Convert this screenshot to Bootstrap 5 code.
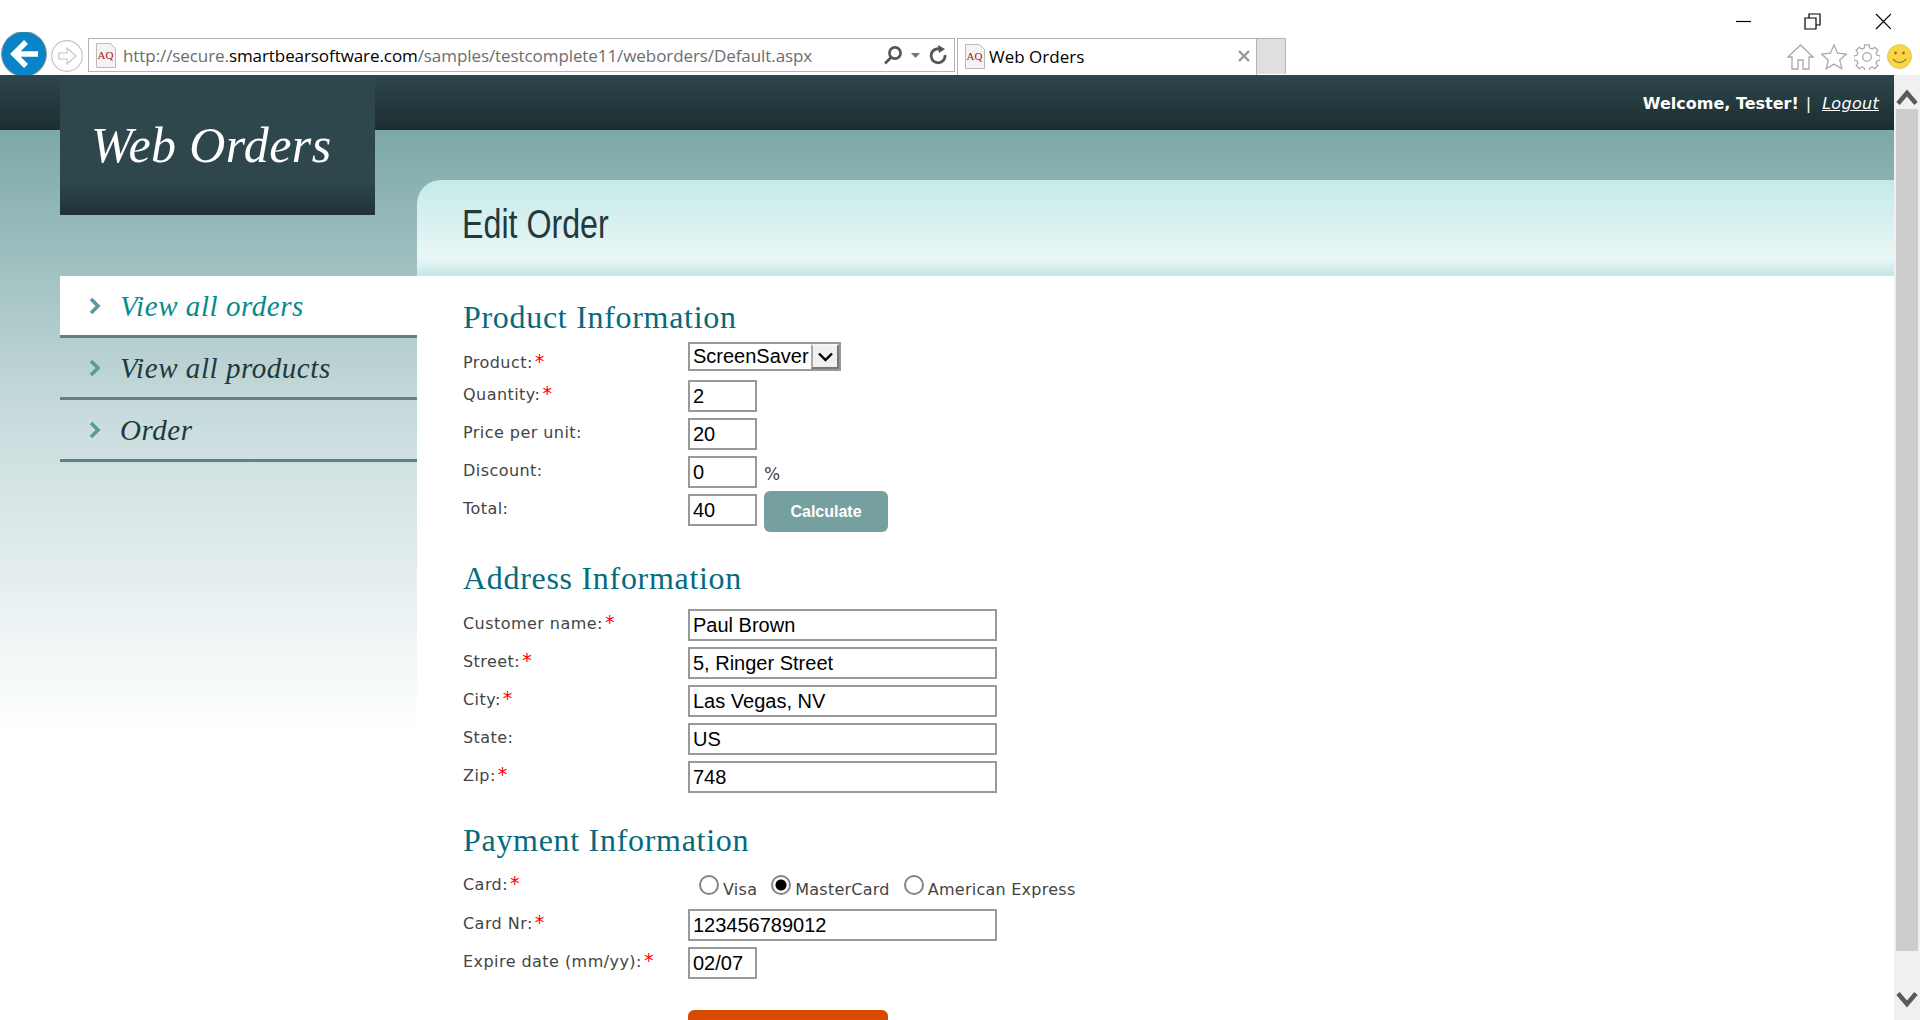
<!DOCTYPE html>
<html lang="en">
<head>
  <meta charset="UTF-8" />
  <meta name="viewport" content="width=device-width, initial-scale=1.0"/>
  <title>Web Orders</title>
  <link href="https://cdn.jsdelivr.net/npm/bootstrap@5.3.3/dist/css/bootstrap.min.css" rel="stylesheet">
  <style>
    html, body { height: 100%; overflow: hidden; }
    body { font-family: "DejaVu Sans", sans-serif; background: #fff; }

    /* browser chrome */
    .ie-chrome { height: 75px; flex: none; }
    .ie-winbar { height: 38px; padding-right: 29px; }
    .ie-winbar svg { display: block; }
    .ie-toolbar { height: 37px; padding-left: 1px; }
    .ie-back { width: 46px; height: 43px; margin-top: -6px; flex: none; }
    .ie-forward { width: 32px; height: 32px; margin-left: 4px; margin-top: 2px; flex: none; }
    .ie-address { width: 867px; height: 34px; margin-left: 5px; border: 1px solid #b4b4b4; padding: 0 6px 0 7px; }
    .ie-url { font: 17px "Open Sans", sans-serif; color: #6d6d6d; margin-left: 7px; white-space: nowrap; padding-top: 1px; letter-spacing: -.08px; }
    .ie-url b { font-weight: 400; color: #000; }
    .ie-tab { width: 300px; height: 37px; margin-left: 2px; border: 1px solid #b4b4b4; border-bottom: 0; padding: 0 6px 2px 7px; font: 17px "Open Sans", sans-serif; color: #000; }
    .ie-newtab { width: 29px; height: 36px; background: #dfdfdf; border: 1px solid #b4b4b4; border-bottom: 0; border-left: 0; }
    .ie-tools { margin-left: auto; margin-top: 6px; padding-right: 8px; gap: 7px; }

    /* page */
    .site { background: linear-gradient(#2d474c, #1c2d30) 0 0 / 100% 55px no-repeat,
                        linear-gradient(#7da8a8 0, #c9dcdd 290px, #fff 600px) 0 55px / 100% 600px no-repeat, #fff; min-width: 0; }
    .side-col { width: 417px; padding-left: 60px; flex: none; }
    .logo-box { width: 315px; height: 140px; background: linear-gradient(#2d474c 75%, #203337); color: #fff; font: italic 50px "Liberation Serif", serif; padding: 45px 0 0 31px; line-height: 1; letter-spacing: .4px; }
    .side-menu { margin-top: 61px; }
    .side-link { height: 62px; border-bottom: 3px solid #5f8385; color: #21393d; font: italic 29px "Liberation Serif", serif; text-decoration: none; padding: 2px 0 0 29px; gap: 19px; letter-spacing: .55px; }
    .side-link svg { margin-top: -2px; }
    .side-link.is-active { background: #fff; color: #078a8c; }
    .main-col { min-width: 0; }
    .welcome { height: 55px; color: #fff; font-size: 16px; padding: 3px 15px 0 0; gap: 7px; }
    .welcome a { color: #fff; font-style: italic; font-weight: 400; margin-left: 4px; letter-spacing: .3px; }
    .title-band { height: 96px; margin-top: 50px; border-top-left-radius: 24px; padding: 22px 0 0 45px;
      background: linear-gradient(#c5eae8 0, #e9f7f6 82%, #c5e6e6 100%); }
    .title-band h1 { font: 400 40px/1.1 "Liberation Sans", sans-serif; color: #22393e; margin: 0; transform: scaleX(.805); transform-origin: left top; }
    .form-area { background: #fff; padding: 24px 0 0 46px; height: 760px; }
    .sec-title { font: 400 32px/34px "Liberation Serif", serif; color: #056a7e; margin: 0 0 14px; letter-spacing: .7px; }
    .sec-title.first { margin-bottom: 8px; }
    .sec-title.gap-big { margin-top: 29px; }
    .fld-row { height: 38px; }
    .fld-label { width: 225px; flex: none; font-size: 16px; line-height: 29px; color: #444; letter-spacing: .45px; }
    .fld-label.first-label { margin-top: 6px; }
    .fld-label i { color: #f00; font-style: normal; font-size: 19px; margin-left: 2px; line-height: 1; }
    .fld-input { height: 32px; width: 69px; border: 2px solid #999; border-radius: 0; padding: 0 3px; font: 20px "Liberation Sans", sans-serif; color: #000; background: #fff; outline: 0; }
    .fld-input.wide { width: 309px; }
    .fld-select { width: 153px; height: 29px; border: 2px solid #999; }
    .fld-select select { appearance: none; width: 100%; height: 100%; border: 0; border-radius: 0; padding: 0 0 2px 3px; font: 20px "Liberation Sans", sans-serif; background: #fff; color: #000; outline: 0; }
    .sel-arrow { right: 0; top: 0; bottom: 0; width: 28px; background: #f0f0f0; border: 2px solid; border-color: #f5f5f5 #777 #777 #aaa; }
    .unit-text { font-size: 17px; color: #444; margin-left: 7px; line-height: 32px; padding-top: 2px; }
    .btn-calc { width: 124px; height: 41px; margin: -3px 0 0 7px; background: #769f9f; color: #fff; border: 0; border-radius: 6px; font: 700 16px "Liberation Sans", sans-serif; }
    .btn-calc:hover { background: #769f9f; color: #fff; }
    .radio-row { height: 39px; margin-top: -1px; }
    .radio-group { padding: 7px 0 0 11px; font-size: 16px; letter-spacing: .25px; color: #444; }
    .radio-group label { display: flex; margin-right: 14px; gap: 4px; line-height: 24px; padding-top: 1px; }
    .radio-group input { appearance: none; width: 20px; height: 20px; margin: 0; border: 2px solid #858585; border-radius: 50%; background: #fff; flex: none; position: relative; top: -3px; }
    .radio-group input:checked { background: radial-gradient(circle, #000 0 5px, #fff 6px); }
    .btn-save { width: 200px; height: 41px; margin: 25px 0 0 225px; background: #d94a00; border: 0; border-radius: 6px; display: block; }
    .scroll-bar { width: 26px; flex: none; background: #f0f0f0; }
    .scroll-thumb { height: 842px; margin: 0 2px; background: #cdcdcd; }
    .scroll-end { height: 34px; padding-bottom: 3px; }
  </style>
</head>
<body class="d-flex flex-column">

  <div class="ie-chrome">
    <div class="ie-winbar d-flex justify-content-end">
      <svg width="170" height="38" viewBox="0 0 170 38" fill="none" stroke="#000" stroke-width="1.2">
        <path d="M15 21.500h15"/>
        <path d="M84 18h11v11H84zM88 18v-4h11v11h-4"/>
        <path d="M155 14l15 15M170 14l-15 15"/>
      </svg>
    </div>
    <div class="ie-toolbar d-flex align-items-start">
      <svg class="ie-back" viewBox="0 0 46 43">
        <circle cx="23" cy="22" r="22.500" fill="#0a84c6" stroke="#9a9a9a"/>
        <path d="M25 10L13 22l12 12M14 22h23" fill="none" stroke="#fff" stroke-width="5.500"/>
      </svg>
      <svg class="ie-forward" viewBox="0 0 32 32" fill="none">
        <circle cx="16" cy="16" r="15.300" fill="#fff" stroke="#c4c4c4" stroke-width="1.200"/>
        <path d="M8 13h8V8l9 8-9 8v-5H8z" stroke="#c4c4c4" stroke-width="1.200"/>
      </svg>
      <div class="ie-address d-flex align-items-center">
        <svg width="20" height="25" viewBox="0 0 20 25"><path d="M.5.5h14l5 5v19H.5z" fill="#f4f4f4" stroke="#bbb"/><text x="1.500" y="16" font-size="11" font-family="Liberation Serif" fill="#b01020">AQ</text></svg>
        <span class="ie-url">http://secure.<b>smartbearsoftware.com</b>/samples/testcomplete11/weborders/Default.aspx</span>
        <div class="ms-auto d-flex align-items-center">
          <svg width="20" height="20" viewBox="0 0 20 20" fill="none" stroke="#555" stroke-width="2.600"><circle cx="12" cy="8" r="5.600"/><path d="M8 12.500L2 18.500"/></svg>
          <svg class="ms-2" width="9" height="5" viewBox="0 0 9 5"><path d="M0 0h9L4.500 5z" fill="#777"/></svg>
          <svg class="ms-2" width="20" height="22" viewBox="0 0 20 22" fill="none" stroke="#555" stroke-width="2.800"><path d="M14 6a7 7 0 1 0 3 5"/><path d="M10 1l7 4-6 4z" fill="#555" stroke="none"/></svg>
        </div>
      </div>
      <div class="ie-tab d-flex align-items-center">
        <svg width="20" height="25" viewBox="0 0 20 25"><path d="M.5.5h14l5 5v19H.5z" fill="#f4f4f4" stroke="#bbb"/><text x="1.500" y="16" font-size="11" font-family="Liberation Serif" fill="#b01020">AQ</text></svg>
        <span class="ms-1">Web Orders</span>
        <svg class="ms-auto" width="12" height="12" viewBox="0 0 12 12"><path d="M1 1l10 10M11 1L1 11" stroke="#999" stroke-width="2.400"/></svg>
      </div>
      <div class="ie-newtab"></div>
      <div class="ie-tools d-flex">
        <svg width="27" height="26" viewBox="0 0 27 26" fill="#fff" stroke="#aaa" stroke-width="1.300"><path d="M13.500 1L1 13h4v12h6v-9h5v9h6V13h4z"/></svg>
        <svg width="26" height="26" viewBox="0 0 26 26" fill="#fff" stroke="#aaa" stroke-width="1.300"><path d="M13 1l3.600 8.200 8.900.8-6.800 5.900 2.100 8.800L13 20.100l-7.800 4.600 2.100-8.800L.5 10l8.900-.8z"/></svg>
        <svg width="26" height="26" viewBox="0 0 26 26" fill="#fff" stroke="#aaa" stroke-width="1.300"><path d="M10.800 1.500h4.400l.6 3.200 2.300 1 2.700-1.800 3.100 3.100-1.800 2.700 1 2.300 3.200.6v4.400l-3.200.6-1 2.300 1.800 2.700-3.100 3.100-2.700-1.800-2.300 1-.6 3.200h-4.400l-.6-3.200-2.300-1-2.700 1.800-3.100-3.100 1.800-2.700-1-2.300-3.200-.6v-4.400l3.200-.6 1-2.300-1.800-2.700 3.100-3.100 2.700 1.800 2.300-1z" transform="translate(0 -.5) scale(1 .98)"/><circle cx="13" cy="13" r="4.300"/></svg>
        <svg width="25" height="25" viewBox="0 0 25 25"><circle cx="12.500" cy="12.500" r="12" fill="#fcd544" stroke="#d8c070" stroke-width=".8"/><circle cx="8.500" cy="9" r="1.400" fill="#8a7a30"/><circle cx="16.500" cy="9" r="1.400" fill="#8a7a30"/><path d="M6 15c3 4.500 10 4.500 13 0" fill="none" stroke="#8a7a30" stroke-width="1.300"/></svg>
      </div>
    </div>
  </div>

  <div class="flex-grow-1 d-flex overflow-hidden">
    <div class="site flex-grow-1 d-flex">
      <div class="side-col">
        <div class="logo-box">Web Orders</div>
        <nav class="side-menu d-flex flex-column">
          <a href="#" class="side-link is-active d-flex align-items-center">
            <svg width="12" height="18" viewBox="0 0 12 18"><path d="M2 2l7 7-7 7" fill="none" stroke="#5b9a9c" stroke-width="3.600"/></svg>View all orders</a>
          <a href="#" class="side-link d-flex align-items-center">
            <svg width="12" height="18" viewBox="0 0 12 18"><path d="M2 2l7 7-7 7" fill="none" stroke="#5b9a9c" stroke-width="3.600"/></svg>View all products</a>
          <a href="#" class="side-link d-flex align-items-center">
            <svg width="12" height="18" viewBox="0 0 12 18"><path d="M2 2l7 7-7 7" fill="none" stroke="#5b9a9c" stroke-width="3.600"/></svg>Order</a>
        </nav>
      </div>

      <div class="main-col flex-grow-1">
        <div class="welcome d-flex justify-content-end align-items-center fw-bold">
          <span>Welcome, Tester!</span><span class="fw-normal">|</span><a href="#">Logout</a>
        </div>
        <div class="title-band"><h1>Edit Order</h1></div>
        <div class="form-area">
          <h2 class="sec-title first">Product Information</h2>
          <div class="fld-row d-flex">
            <div class="fld-label first-label">Product:<i>*</i></div>
            <div class="fld-select position-relative">
              <select><option>ScreenSaver</option></select>
              <div class="sel-arrow position-absolute d-flex align-items-center justify-content-center">
                <svg width="15" height="10" viewBox="0 0 15 10"><path d="M1 1.500l6.500 6.500 6.500-6.500" fill="none" stroke="#000" stroke-width="2.400"/></svg>
              </div>
            </div>
          </div>
          <div class="fld-row d-flex"><div class="fld-label">Quantity:<i>*</i></div><input class="fld-input" value="2"></div>
          <div class="fld-row d-flex"><div class="fld-label">Price per unit:</div><input class="fld-input" value="20"></div>
          <div class="fld-row d-flex"><div class="fld-label">Discount:</div><input class="fld-input" value="0"><span class="unit-text">%</span></div>
          <div class="fld-row d-flex"><div class="fld-label">Total:</div><input class="fld-input" value="40"><button type="button" class="btn btn-calc p-0">Calculate</button></div>

          <h2 class="sec-title gap-big">Address Information</h2>
          <div class="fld-row d-flex"><div class="fld-label">Customer name:<i>*</i></div><input class="fld-input wide" value="Paul Brown"></div>
          <div class="fld-row d-flex"><div class="fld-label">Street:<i>*</i></div><input class="fld-input wide" value="5, Ringer Street"></div>
          <div class="fld-row d-flex"><div class="fld-label">City:<i>*</i></div><input class="fld-input wide" value="Las Vegas, NV"></div>
          <div class="fld-row d-flex"><div class="fld-label">State:</div><input class="fld-input wide" value="US"></div>
          <div class="fld-row d-flex"><div class="fld-label">Zip:<i>*</i></div><input class="fld-input wide" value="748"></div>

          <h2 class="sec-title mt-4">Payment Information</h2>
          <div class="radio-row d-flex">
            <div class="fld-label">Card:<i>*</i></div>
            <div class="radio-group d-flex">
              <label><input type="radio" name="card">Visa</label>
              <label><input type="radio" name="card" checked>MasterCard</label>
              <label><input type="radio" name="card">American Express</label>
            </div>
          </div>
          <div class="fld-row d-flex"><div class="fld-label">Card Nr:<i>*</i></div><input class="fld-input wide" value="123456789012"></div>
          <div class="fld-row d-flex"><div class="fld-label">Expire date (mm/yy):<i>*</i></div><input class="fld-input" value="02/07"></div>
          <button type="button" class="btn btn-save p-0" aria-label="Save"></button>
        </div>
      </div>
    </div>

    <div class="scroll-bar d-flex flex-column">
      <div class="scroll-end d-flex align-items-end justify-content-center">
        <svg width="22" height="18" viewBox="0 0 22 18"><path d="M2 15.500L11 5l9 10.500" fill="none" stroke="#5a5a5a" stroke-width="4.500"/></svg>
      </div>
      <div class="scroll-thumb"></div>
      <div class="flex-grow-1 d-flex align-items-end justify-content-center scroll-end">
        <svg class="mb-2" width="22" height="18" viewBox="0 0 22 18"><path d="M2 2.500L11 13l9-10.500" fill="none" stroke="#5a5a5a" stroke-width="4.500"/></svg>
      </div>
    </div>
  </div>

</body>
</html>
